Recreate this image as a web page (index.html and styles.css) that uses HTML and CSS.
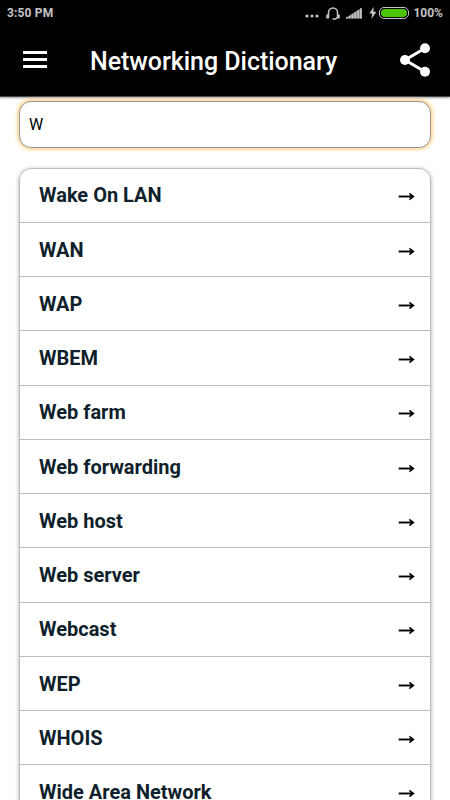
FILE: index.html
```html
<!DOCTYPE html>
<html lang="en">
<head>
<meta charset="utf-8">
<title>Networking Dictionary</title>
<link rel="stylesheet" href="styles.css">
</head>
<body>
<svg class="defs" aria-hidden="true"><symbol id="arrow" viewBox="0 0 17 9"><path d="M.7 4.500H14" fill="none" stroke="#000" stroke-width="1.900"/><path d="M11.700 .8L16.700 4.500L11.700 8.200L11.100 7.200L12.800 4.500L11.100 1.800z"/></symbol></svg>
<div class="phone">
  <header class="top">
    <div class="status">
      <span class="time">3:50 PM</span>
      <svg class="dots" viewBox="0 0 14 4"><circle cx="2" cy="2" r="1.600"/><circle cx="7" cy="2" r="1.600"/><circle cx="12" cy="2" r="1.600"/></svg>
      <svg class="headset" viewBox="0 0 14 13"><path d="M2.500 10V5.500a4.500 4.500 0 0 1 9 0V10M1 7.500v3.300h2M13 7.500v3.300h-2L9.500 12H6.500" fill="none" stroke="#c4c4c4" stroke-width="1.500"/></svg>
      <svg class="signal" viewBox="0 0 16 12"><path d="M0 11.500V10.500L16 .5v11z" fill="#868686"/><path d="M0 10.300h2v1.200H0zM3 9h1.600v2.500H3zM5.700 7.300h1.600v4.200H5.700zM8.400 5.500H10v6H8.400zM11.100 3.700h1.600v7.800h-1.600zM14 1.500h1.600v10H14z"/></svg>
      <svg class="bolt" viewBox="0 0 8 12"><path d="M4.600 0L.3 6.600h2.800L2.500 12 7.400 4.700H4.500z"/></svg>
      <span class="battery"><span class="charge"></span></span>
      <span class="percent">100%</span>
    </div>
    <div class="bar">
      <svg class="menu" viewBox="0 0 24 18"><path d="M0 0h24v3H0zM0 7h24v3H0zM0 14h24v3H0z"/></svg>
      <h1>Networking Dictionary</h1>
      <svg class="share" viewBox="0 0 30 34"><path d="M25 5.300L5 17l20 11.700" fill="none" stroke="#fff" stroke-width="3"/><circle cx="25" cy="5.300" r="5"/><circle cx="5" cy="17" r="5"/><circle cx="25" cy="28.700" r="5"/></svg>
    </div>
  </header>
  <main>
    <input class="search" type="text" value="W" aria-label="Search">
    <ul class="terms">
      <li><span>Wake On LAN</span><svg><use href="#arrow"/></svg></li>
      <li><span>WAN</span><svg><use href="#arrow"/></svg></li>
      <li><span>WAP</span><svg><use href="#arrow"/></svg></li>
      <li><span>WBEM</span><svg><use href="#arrow"/></svg></li>
      <li><span>Web farm</span><svg><use href="#arrow"/></svg></li>
      <li><span>Web forwarding</span><svg><use href="#arrow"/></svg></li>
      <li><span>Web host</span><svg><use href="#arrow"/></svg></li>
      <li><span>Web server</span><svg><use href="#arrow"/></svg></li>
      <li><span>Webcast</span><svg><use href="#arrow"/></svg></li>
      <li><span>WEP</span><svg><use href="#arrow"/></svg></li>
      <li><span>WHOIS</span><svg><use href="#arrow"/></svg></li>
      <li><span>Wide Area Network</span><svg><use href="#arrow"/></svg></li>
    </ul>
  </main>
</div>
</body>
</html>
```
FILE: styles.css
```css
* { box-sizing: border-box; }
body { margin: 0; background: #fff; font-family: Roboto, sans-serif; }
svg { display: block; flex: none; }
.defs { display: none; }
.phone { height: 800px; overflow: hidden; }
.top { height: 97px; background: #000; border-bottom: 1px solid #474747; box-shadow: 0 1px 2px #0006; }
.status { height: 26px; display: flex; align-items: center; padding: 0 8px 0 7px; color: #c4c4c4; fill: #c4c4c4; font-size: 12px; font-weight: 700; }
.time { margin-right: auto; letter-spacing: .15px; }
.dots { width: 14px; height: 4px; margin: 6px 7px 0 0; }
.headset { width: 14px; height: 13px; margin-right: 6px; }
.signal { width: 16px; height: 12px; margin-right: 7px; }
.bolt { width: 8px; height: 12px; margin-right: 2px; }
.battery { width: 30px; height: 12px; padding: 1px; border: 1px solid #c4c4c4; border-radius: 5px; margin-right: 4px; }
.charge { display: block; height: 8px; border-radius: 4px; background: #49c505; }
.percent { margin-right: -1px; }
.bar { height: 68px; display: flex; align-items: center; padding: 0 20px 0 23px; fill: #fff; }
.menu { width: 24px; height: 18px; margin-right: 43px; }
h1 { margin: 4px auto 0 0; color: #fff; font-size: 25px; font-weight: 500; line-height: 30px; letter-spacing: -.04px; white-space: nowrap; }
.share { width: 30px; height: 34px; }
main { padding: 4px 19px 0; }
.search { display: block; width: 412px; height: 47px; padding: 0 9px; border: 1px solid #96969c; border-radius: 12px; outline: none; background: #fff; box-shadow: 0 0 4px 1px #ffc766; color: #000; font: 400 16px Roboto, sans-serif; }
.terms { list-style: none; margin: 19.700px 0 0; padding: 0; border: 1px solid #bcbcbc; border-radius: 12px 12px 0 0; box-shadow: 0 1px 4px #0005; }
.terms li { height: 54.250px; display: flex; align-items: center; justify-content: space-between; padding: 0 15px 0 19px; border-bottom: 1px solid #bcbcbc; color: #101f2c; font-size: 20px; font-weight: 700; line-height: 24px; }
.terms svg { width: 17px; height: 9px; margin-top: 3px; }
```
